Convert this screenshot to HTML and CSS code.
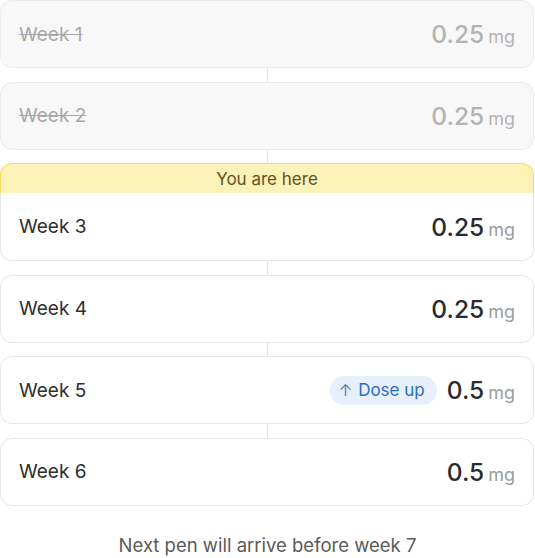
FILE: index.html
```html
<!DOCTYPE html>
<html lang="en">
<head>
    <meta charset="UTF-8">
    <meta name="viewport" content="width=device-width, initial-scale=1.0">
    <title>Dose schedule</title>
    <link rel="stylesheet" href="styles.css">
</head>
<body>

<div class="plan">
    <div class="step">
        <div class="card done">
            <span class="week">Week 1</span>
            <span class="dose"><b>0.25</b><small>mg</small></span>
        </div>
    </div>

    <div class="step">
        <div class="card done">
            <span class="week">Week 2</span>
            <span class="dose"><b>0.25</b><small>mg</small></span>
        </div>
    </div>

    <div class="step">
        <div class="here">You are here</div>
        <div class="card current">
            <span class="week">Week 3</span>
            <span class="dose"><b>0.25</b><small>mg</small></span>
        </div>
    </div>

    <div class="step">
        <div class="card">
            <span class="week">Week 4</span>
            <span class="dose"><b>0.25</b><small>mg</small></span>
        </div>
    </div>

    <div class="step">
        <div class="card">
            <span class="week">Week 5</span>
            <span class="right">
                <span class="badge"><span class="arrow">↑</span> Dose up</span>
                <span class="dose"><b>0.5</b><small>mg</small></span>
            </span>
        </div>
    </div>

    <div class="step">
        <div class="card">
            <span class="week">Week 6</span>
            <span class="dose"><b>0.5</b><small>mg</small></span>
        </div>
    </div>
</div>

<p class="note">Next pen will arrive before week 7</p>

</body>
</html>
```

FILE: styles.css
```css
/* Base */
* {
    margin: 0;
    padding: 0;
    box-sizing: border-box;
}

body {
    font-family: Inter, "Noto Sans", sans-serif;
    background-color: #fff;
    color: #2b2b2b;
}

.plan {
    display: flex;
    flex-direction: column;
    padding-right: 1px;
}

/* connector line between the steps */
.step + .step::before {
    content: "";
    display: block;
    width: 1px;
    height: 13.5px;
    margin: 0 auto;
    background-color: #e3e3e3;
}

.card {
    height: 68px;
    display: flex;
    justify-content: space-between;
    align-items: center;
    padding: 0 18px;
    background-color: #fff;
    border: 1px solid #e6e6e6;
    border-radius: 12px;
}

.week {
    font-size: 19px;
    color: #2e2e2e;
}

.right {
    display: flex;
    align-items: center;
    gap: 10px;
}

.dose {
    display: flex;
    align-items: baseline;
    gap: 4px;
}

.dose b {
    font-size: 24.5px;
    font-weight: 500;
    color: #2b2b2b;
}

.dose small {
    font-size: 18px;
    color: #9b9b9b;
}

/* past weeks */
.card.done {
    background-color: #f8f8f8;
    border-color: #ececec;
}

.card.done .week {
    color: #a8a8a8;
    text-decoration: line-through;
}

.card.done .dose b,
.card.done .dose small {
    color: #b3b3b3;
}

/* current week */
.here {
    height: 30px;
    display: flex;
    justify-content: center;
    align-items: center;
    font-size: 17px;
    color: #5f5420;
    background-color: #fdf2b8;
    border: 1px solid #f6dc58;
    border-bottom: none;
    border-radius: 12px 12px 0 0;
}

.card.current {
    border-top: none;
    border-radius: 0 0 12px 12px;
}

/* Dose up badge */
.badge {
    display: flex;
    align-items: center;
    gap: 6px;
    height: 29px;
    padding: 0 12px 0 9px;
    border-radius: 15px;
    background-color: #e7effb;
    color: #2d6cc0;
    font-size: 17px;
}

.arrow {
    font-size: 16px;
    font-weight: 300;
}

.note {
    margin-top: 28px;
    text-align: center;
    font-size: 18.5px;
    color: #5a5a5a;
}
```
